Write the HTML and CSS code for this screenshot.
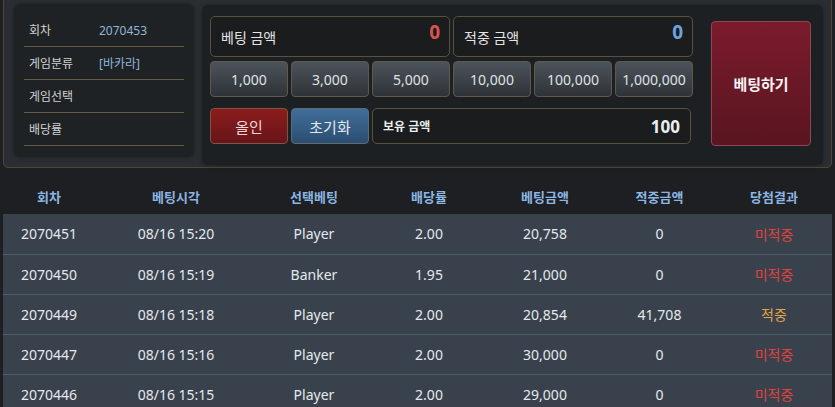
FILE: index.html
```html
<!DOCTYPE html>
<html lang="ko">
<head>
<meta charset="utf-8">
<link rel="stylesheet" href="styles.css">
</head>
<body>
<div class="top">
  <div class="info">
    <div class="info-row"><span class="info-label">회차</span><span class="info-value">2070453</span></div>
    <div class="info-row"><span class="info-label">게임분류</span><span class="info-value">[바카라]</span></div>
    <div class="info-row"><span class="info-label">게임선택</span><span class="info-value"></span></div>
    <div class="info-row"><span class="info-label">배당률</span><span class="info-value"></span></div>
  </div>
  <div class="bet-panel">
    <div class="bet-grid">
      <div class="amounts">
        <div class="amount-box"><span class="amount-label">베팅 금액</span><span class="amount-value red">0</span></div>
        <div class="amount-box"><span class="amount-label">적중 금액</span><span class="amount-value blue">0</span></div>
      </div>
      <div class="chips">
        <button class="chip">1,000</button>
        <button class="chip">3,000</button>
        <button class="chip">5,000</button>
        <button class="chip">10,000</button>
        <button class="chip">100,000</button>
        <button class="chip">1,000,000</button>
      </div>
      <div class="actions">
        <button class="btn-allin">올인</button>
        <button class="btn-reset">초기화</button>
        <div class="hold-box"><span class="hold-label">보유 금액</span><span class="hold-value">100</span></div>
      </div>
    </div>
    <button class="btn-bet">베팅하기</button>
  </div>
</div>
<table class="history">
  <colgroup>
    <col class="c1"><col class="c2"><col class="c3"><col class="c4"><col class="c5"><col class="c6"><col class="c7">
  </colgroup>
  <thead>
    <tr><th>회차</th><th>베팅시각</th><th>선택베팅</th><th>배당률</th><th>베팅금액</th><th>적중금액</th><th>당첨결과</th></tr>
  </thead>
  <tbody>
    <tr><td>2070451</td><td>08/16 15:20</td><td>Player</td><td>2.00</td><td>20,758</td><td>0</td><td class="lose">미적중</td></tr>
    <tr><td>2070450</td><td>08/16 15:19</td><td>Banker</td><td>1.95</td><td>21,000</td><td>0</td><td class="lose">미적중</td></tr>
    <tr><td>2070449</td><td>08/16 15:18</td><td>Player</td><td>2.00</td><td>20,854</td><td>41,708</td><td class="win">적중</td></tr>
    <tr><td>2070447</td><td>08/16 15:16</td><td>Player</td><td>2.00</td><td>30,000</td><td>0</td><td class="lose">미적중</td></tr>
    <tr><td>2070446</td><td>08/16 15:15</td><td>Player</td><td>2.00</td><td>29,000</td><td>0</td><td class="lose">미적중</td></tr>
  </tbody>
</table>
</body>
</html>
```
FILE: styles.css
```css
* { box-sizing: border-box; }
html, body { margin: 0; padding: 0; }
body {
  background: #1d1f22;
  padding: 0 3px;
  font-family: "Noto Sans", "Noto Sans CJK KR", sans-serif;
  color: #e2e6ea;
  overflow: hidden;
}
button { font-family: inherit; cursor: pointer; padding: 0; }

.top {
  margin-top: -4px;
  height: 172px;
  background: #2a2e32;
  border: 1px solid #4b4838;
  border-radius: 5px;
  padding: 7px 8px 0 10px;
  display: flex;
  align-items: flex-start;
  gap: 8px;
}

.info {
  width: 180px;
  height: 153px;
  background: #1f2224;
  border-radius: 6px;
  box-shadow: 0 0 4px rgba(0,0,0,0.35);
  padding: 10px 10px 0;
}
.info-row {
  height: 33px;
  border-bottom: 1px solid #635b42;
  display: flex;
  align-items: center;
  font-size: 12px;
  padding-left: 5px;
}
.info-label { width: 70px; color: #cfd2d4; }
.info-value { color: #8fb6da; }

.bet-panel {
  margin-top: 1px;
  width: 621px;
  height: 160px;
  background: #1d2022;
  border-radius: 6px;
  box-shadow: 0 0 4px rgba(0,0,0,0.35);
  padding: 11px 8px 0 8px;
  display: flex;
  align-items: flex-start;
}
.bet-grid { width: 483px; }
.amounts {
  display: grid;
  grid-template-columns: 1fr 1fr;
  gap: 3px;
}
.amount-box {
  height: 41px;
  border: 1px solid #57523f;
  border-radius: 5px;
  background: #1a1c1e;
  display: flex;
  justify-content: space-between;
  align-items: center;
  padding: 0 9px 0 10px;
}
.amount-label { font-size: 14px; color: #e4e4e4; }
.amount-value {
  align-self: flex-start;
  margin-top: 4px;
  font-size: 19px;
  line-height: 22px;
  font-weight: 700;
}
.red { color: #d9534f; }
.blue { color: #6ea4dc; }

.chips, .actions {
  display: grid;
  grid-template-columns: repeat(6, 1fr);
  gap: 3px;
}
.chips { margin-top: 4px; }
.actions { margin-top: 11px; }
.chip, .btn-allin, .btn-reset {
  height: 36px;
  border-radius: 4px;
  font-size: 14px;
  color: #dfe2e5;
}
.btn-allin, .btn-reset { font-size: 15px; }
.chip {
  background: linear-gradient(#4c535a, #2f3338);
  border: 1px solid #5d5a4c;
}
.btn-allin {
  background: linear-gradient(#8c1c1c, #66151a);
  border: 1px solid #7e5444;
  color: #efd6d6;
}
.btn-reset {
  background: linear-gradient(#416f9b, #2b4d70);
  border: 1px solid #5e6a74;
  color: #e2e8ee;
}
.hold-box {
  grid-column: span 4;
  height: 36px;
  border: 1px solid #57523f;
  border-radius: 5px;
  background: #1a1c1e;
  display: flex;
  justify-content: space-between;
  align-items: center;
  padding: 0 10px 0 10px;
  margin-right: 2px;
}
.hold-label { font-size: 12px; font-weight: 700; color: #eceded; }
.hold-value { font-size: 17px; font-weight: 700; color: #eceded; }

.btn-bet {
  margin: 5px 0 0 18px;
  width: 100px;
  height: 125px;
  background: linear-gradient(#7b1b2c, #591520);
  border: 1px solid #8d4656;
  border-radius: 4px;
  color: #f4f4f4;
  font-size: 15px;
  font-weight: 700;
}

.history {
  width: 829px;
  border-collapse: collapse;
  table-layout: fixed;
}
.c1 { width: 92px; }
.c2 { width: 162px; }
.c3 { width: 114px; }
.c4 { width: 116px; }
.c5 { width: 116px; }
.c6 { width: 113px; }
.c7 { width: 116px; }
.history th {
  height: 46px;
  padding: 20px 0 8px;
  line-height: 18px;
  font-size: 13px;
  font-weight: 700;
  color: #8cb6e2;
  text-align: center;
}
.history td {
  height: 40px;
  padding: 0;
  text-align: center;
  font-size: 14px;
  color: #e4e8ec;
  background: #39424c;
  border-bottom: 1px solid #4a5d6c;
}
.history td.lose { color: #e0433d; }
.history td.win { color: #e3a547; }
```
